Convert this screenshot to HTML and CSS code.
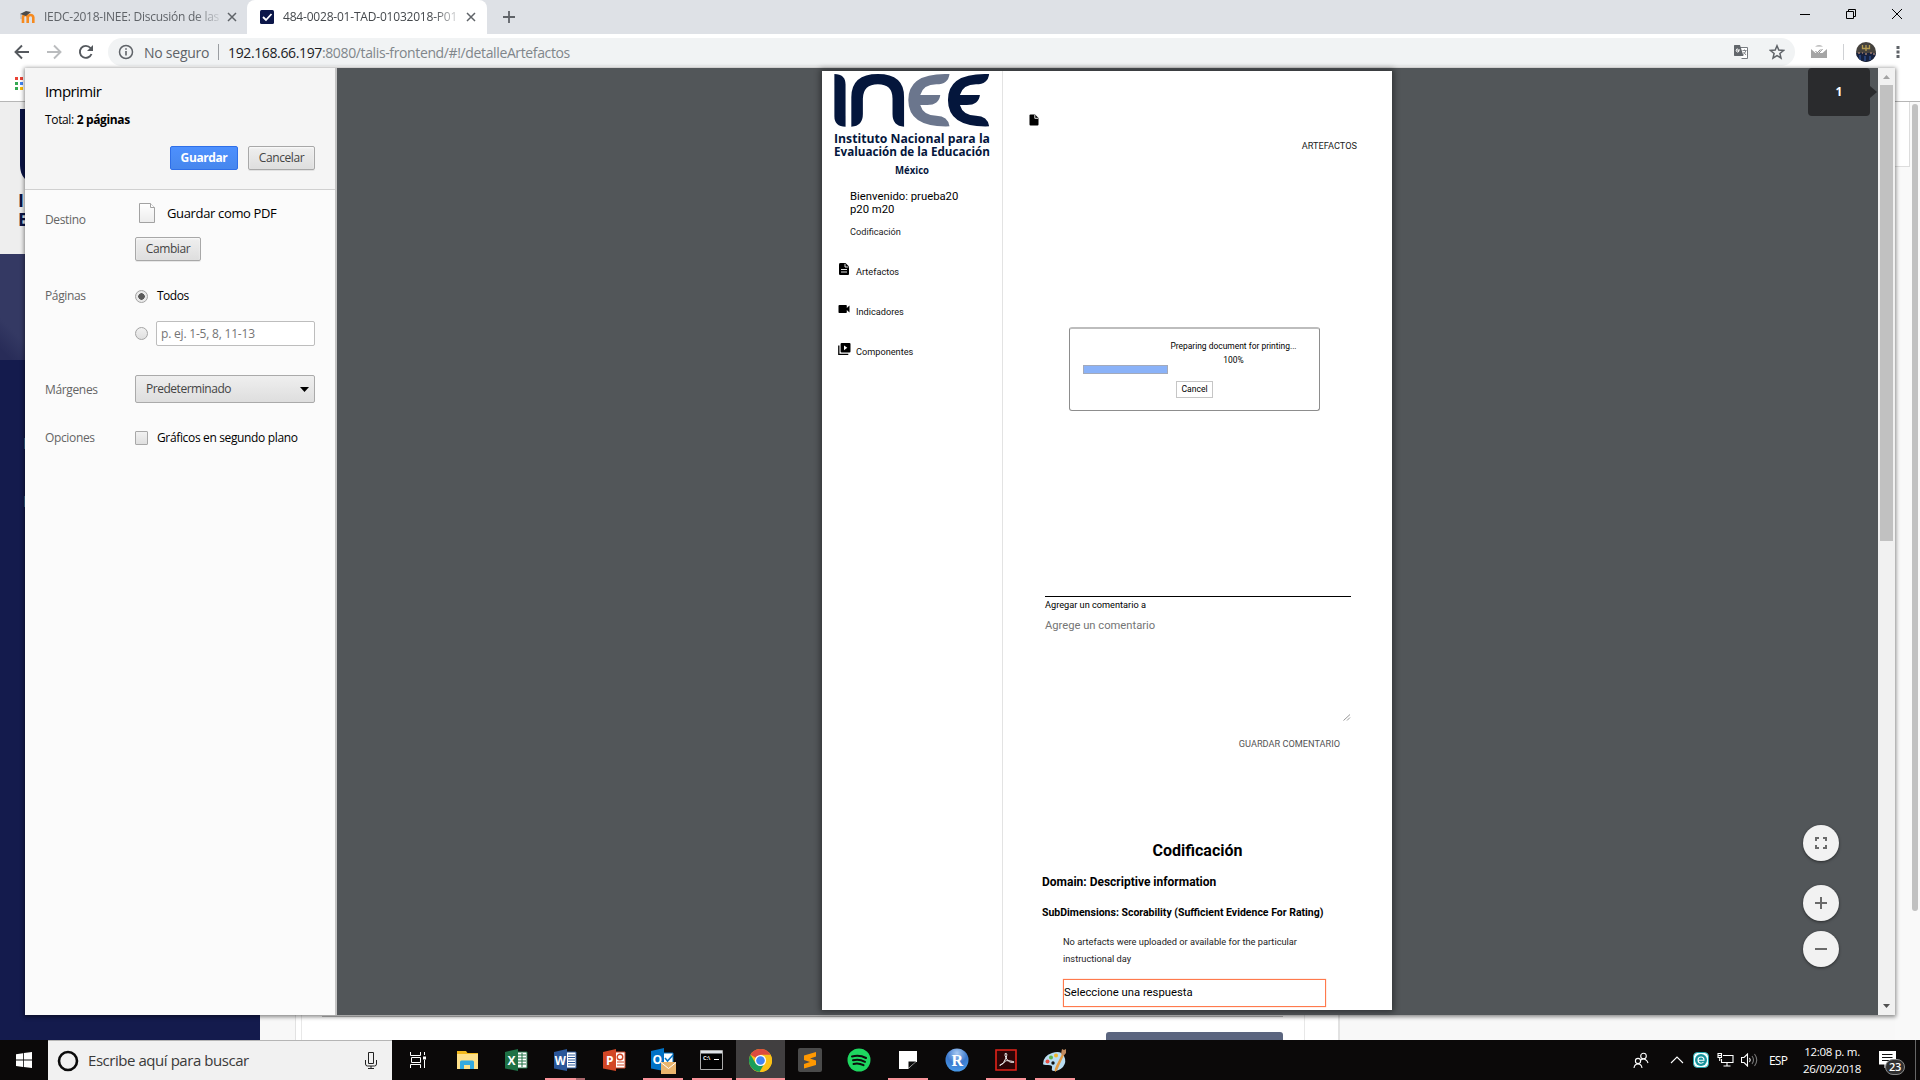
FILE: index.html
```html
<!DOCTYPE html>
<html lang="es">
<head>
<meta charset="utf-8">
<title>484-0028-01-TAD-01032018-P01</title>
<link rel="stylesheet" href="styles.css">
</head>
<body>
<div class="desktop">
  <header class="tabstrip">
    <div class="tab">
      <svg class="favicon" width="16" height="16" viewBox="0 0 16 16"><path d="M3 14V8.500q0-2.500 2.200-2.500t2.500 2.500V14M7.700 8.500q.3-2.500 2.800-2.500t2.800 2.500V14" fill="none" stroke="#f68a1f" stroke-width="2.600"/><path d="M0 5l6-3 5 1-5 4z" fill="#4a4a4a"/><path d="M1 5v5" stroke="#999" stroke-width=".7"/></svg>
      <span class="tab-title t-moodle">IEDC-2018-INEE: Discusión de las</span>
      <svg class="tab-close" width="10" height="10" viewBox="0 0 10 10"><path d="M1 1l8 8M9 1l-8 8"/></svg>
    </div>
    <div class="tab active">
      <svg class="favicon" width="16" height="16" viewBox="0 0 16 16"><rect x="1" y="1" width="14" height="14" rx="1.500" fill="#0b1648"/><path d="M4 8l3 3 5.500-6" fill="none" stroke="#fff" stroke-width="1.800"/></svg>
      <span class="tab-title t-current">484-0028-01-TAD-01032018-P01</span>
      <svg class="tab-close" width="10" height="10" viewBox="0 0 10 10"><path d="M1 1l8 8M9 1l-8 8"/></svg>
    </div>
    <svg class="new-tab" width="14" height="14" viewBox="0 0 14 14"><path d="M7 1v12M1 7h12" stroke="#5f6368" stroke-width="1.800"/></svg>
    <div class="window-buttons">
      <svg width="12" height="12" viewBox="0 0 12 12"><path d="M1 6.500h10"/></svg>
      <svg width="12" height="12" viewBox="0 0 12 12"><path d="M1.500 3.500h7v7h-7zM3.500 3.500v-2h7v7h-2"/></svg>
      <svg width="12" height="12" viewBox="0 0 12 12"><path d="M1 1l10 10M11 1L1 11"/></svg>
    </div>
  </header>

  <div class="toolbar">
    <div class="nav-icons">
      <svg width="16" height="16" viewBox="0 0 16 16"><path d="M15 8H2M8 1.500L1.500 8 8 14.500" stroke="#55595e"/></svg>
      <svg width="16" height="16" viewBox="0 0 16 16"><path d="M1 8h13M8 1.500L14.500 8 8 14.500" stroke="#babcbe"/></svg>
      <svg width="16" height="16" viewBox="0 0 16 16"><path d="M13.500 10A6 6 0 1 1 12.500 4L14 5.500" stroke="#55595e"/><path d="M15 1v6H9z" fill="#55595e" stroke="none"/></svg>
    </div>
    <div class="omnibox">
      <svg width="16" height="16" viewBox="0 0 16 16"><circle cx="8" cy="8" r="6.500" fill="none" stroke="#5f6368" stroke-width="1.500"/><path d="M8 7v4.500M8 4.200v1.600" stroke="#5f6368" stroke-width="1.600"/></svg>
      <span class="security">No seguro</span>
      <span class="omni-sep"></span>
      <span class="url"><b>192.168.66.197</b>:8080/talis-frontend/#!/detalleArtefactos</span>
      <svg class="translate" width="16" height="16" viewBox="0 0 16 16"><path d="M6 3.500h8.500v11H8.500" fill="#fff" stroke="#777b80"/><path d="M1.500 1H7l3.500 11h-9Q1 12 1 11V2q0-1 .5-1z" fill="#62666b"/><path d="M7 6H5v1h1q-.5 1.300-1.700 1T3.200 6.200 5 5" fill="none" stroke="#fff" stroke-width="1"/><path d="M9.500 6.500h4M11.500 5.500v1M13 6.500q-1 3-3 4M10.500 8l2.500 3" fill="none" stroke="#777b80" stroke-width=".9"/></svg>
      <svg class="star" width="16" height="16" viewBox="0 0 16 16"><path d="M8 1.800l1.800 4.300 4.700.4-3.600 3 1.100 4.600L8 11.600l-4 2.500 1.100-4.600-3.600-3 4.700-.4z" fill="none" stroke="#5f6368" stroke-width="1.500"/></svg>
    </div>
    <svg class="ext" width="16" height="14" viewBox="0 0 16 14"><path d="M0 4v9h16V4l-4.500 4h-7z" fill="#a5a5a5"/><path d="M4 1.500Q8-1 12 1.500z" fill="#a5a5a5"/><path d="M4.500 6l1.800 2 3-3.500M8 8l3.500-4" fill="none" stroke="#8c8c8c"/></svg>
    <span class="tool-sep"></span>
    <svg class="avatar" width="20" height="20" viewBox="0 0 20 20"><defs><clipPath id="face"><circle cx="10" cy="10" r="10"/></clipPath></defs><g clip-path="url(#face)"><path d="M0 0h20v20H0z" fill="#45423e"/><path d="M0 11h20v9H0z" fill="#16213e"/><path d="M6.500 3v3.500h7V3M10 3v6" fill="none" stroke="#b59c50" stroke-width="1.300"/><path d="M2 11h2m2 0h1m2 1h2m3-1h2m1 1h2" stroke="#9b7a6d" stroke-width="1.500"/><path d="M4 13v5m5-4v5m5-5v4" stroke="#2c4a86" stroke-width="1.500"/></g></svg>
    <svg class="menu-dots" width="4" height="14" viewBox="0 0 4 14"><path d="M.5 1h3v3h-3zM.5 5.500h3v3h-3zM.5 10h3v3h-3z" fill="#5f6368"/></svg>
  </div>

  <main class="viewport">
    <div class="bookmarks">
      <svg width="15" height="13" viewBox="0 0 15 13"><path d="M0 0h3v3H0z" fill="#ea4335"/><path d="M5 0h3v3H5z" fill="#ea4335"/><path d="M0 5h3v3H0zM0 10h3v3H0z" fill="#34a853"/><path d="M5 5h3v3H5z" fill="#4285f4"/><path d="M5 10h3v3H5z" fill="#fbbc05"/></svg>
    </div>
    <div class="site">
      <aside class="site-nav">
        <div class="site-brand">
          <svg width="20" height="82" viewBox="0 0 20 82"><path d="M0 0h20v76Q0 74 0 56z" fill="#0a1445"/></svg>
          <span>I</span><span>E</span>
        </div>
        <div class="site-photo"></div>
        <div class="site-links"><i></i><i></i></div>
      </aside>
      <section class="site-body">
        <div class="site-card">
          <div class="site-form"><div class="site-field"></div><div class="site-button"></div></div>
        </div>
      </section>
      <div class="site-rail"><div class="site-rail-top"></div></div>
      <div class="site-scroll"><div></div></div>
    </div>

    <div class="print-dialog">
      <section class="settings">
        <div class="settings-head">
          <h1>Imprimir</h1>
          <p class="total">Total: <b>2 páginas</b></p>
          <div class="actions">
            <button class="btn primary">Guardar</button>
            <button class="btn cancel">Cancelar</button>
          </div>
        </div>
        <div class="row row-dest">
          <span class="label l-dest">Destino</span>
          <div class="field">
            <div class="dest"><svg width="18" height="22" viewBox="0 0 18 22"><defs><linearGradient id="sheet" x2="0" y2="1"><stop stop-color="#fff"/><stop offset="1" stop-color="#ececec"/></linearGradient></defs><path d="M1.500 1.500h11l4 4v15h-15z" fill="url(#sheet)" stroke="#a2a2a2"/><path d="M12.500 1.500v4h4" fill="#fff" stroke="#a2a2a2"/></svg><span class="t-pdf">Guardar como PDF</span></div>
            <button class="btn change">Cambiar</button>
          </div>
        </div>
        <div class="row row-pages">
          <span class="label l-pages">Páginas</span>
          <div class="field">
            <div class="choice"><i class="radio on"></i><span class="t-todos">Todos</span></div>
            <div class="choice range"><i class="radio"></i><span class="input">p. ej. 1-5, 8, 11-13</span></div>
          </div>
        </div>
        <div class="row row-margins">
          <span class="label l-margins">Márgenes</span>
          <div class="field select"><span class="t-sel">Predeterminado</span><svg width="9" height="5" viewBox="0 0 9 5"><path d="M0 0h9L4.500 5z"/></svg></div>
        </div>
        <div class="row row-options">
          <span class="label l-options">Opciones</span>
          <div class="field choice"><i class="check"></i><span class="t-graf">Gráficos en segundo plano</span></div>
        </div>
      </section>

      <section class="preview">
        <article class="sheet">
          <aside class="sheet-side">
            <svg class="logo" width="158" height="104" viewBox="0 0 158 104">
              <g transform="translate(1 0) scale(.3850 .3333) translate(-64 -33)">
                <path d="M65 42q29 0 29 32v126q-29 0-29-32z" fill="#04163c"/>
                <path d="M109 200V112Q109 42 178 42t68 70v88q-30-2-30-38v-46q0-43-38-43t-39 43v46q0 36-30 38z" fill="#04163c"/>
                <path d="M364 42q-3 31-34 31-34 0-42 32h52q-3 30-34 30h-18q8 32 42 32 30 0 34 32-107 4-107-79t107-78z" fill="#6b768d"/>
                <path d="M467 42q-3 31-34 31-34 0-42 32h52q-3 30-34 30h-18q8 32 42 32 30 0 34 32-107 4-107-79t107-78z" fill="#04163c"/>
              </g>
              <g fill="#04163c" font-family="Open Sans, sans-serif" font-weight="700">
                <text x="1" y="72" font-size="13.200" textLength="156" lengthAdjust="spacingAndGlyphs">Instituto Nacional para la</text>
                <text x="1" y="85" font-size="13.200" textLength="156" lengthAdjust="spacingAndGlyphs">Evaluación de la Educación</text>
                <text x="62" y="103" font-size="11" textLength="34" lengthAdjust="spacingAndGlyphs">México</text>
              </g>
            </svg>
            <p class="welcome">Bienvenido: prueba20<br>p20 m20</p>
            <p class="role">Codificación</p>
            <nav class="side-links">
              <a><svg width="12" height="12" viewBox="0 0 12 12"><path d="M2.500 0H7.500L11 3.500V11q0 1-1 1H2.200Q1 12 1 11V1.200Q1 0 2.500 0z"/><path d="M7 .8V4h3.300M3 6.500h6M3 9h6" fill="none" stroke="#fff" stroke-width=".9"/></svg><span>Artefactos</span></a>
              <a><svg width="12" height="12" viewBox="0 0 12 12"><path d="M1.500 2H8q.8 0 .8.800V5l2.700-2.500v7L8.800 7v2.200q0 .8-.8.800H1.300q-.8 0-.8-.8V2.800q0-.8 1-.8z"/></svg><span>Indicadores</span></a>
              <a><svg width="13" height="12" viewBox="0 0 13 12"><path d="M3.600 0H11.500q1 0 1 1v7.500q0 1-1 1H3.600q-1 0-1-1V1q0-1 1-1z"/><path d="M.8 2.500v8.800h9.500" fill="none" stroke="#000" stroke-width="1.300"/><path d="M6 2.500v4.700l3.300-2.400z" fill="#fff"/></svg><span>Componentes</span></a>
            </nav>
          </aside>
          <div class="sheet-main">
            <svg class="doc-icon" width="10" height="12" viewBox="0 0 10 12"><path d="M1.500.5H6L9.500 4v6.500q0 1-1 1H1.500q-1 0-1-1v-9q0-1 1-1z"/><path d="M5.800.8V4.300H9.200" fill="none" stroke="#fff" stroke-width=".9"/></svg>
            <div class="crumb"><span class="t-crumb">ARTEFACTOS</span></div>
            <div class="progress-box">
              <div class="progress-text"><span class="t-prep">Preparing document for printing...</span><span>100%</span></div>
              <div class="progress-bar"></div>
              <div class="progress-cancel"><span>Cancel</span></div>
            </div>
            <div class="comment">
              <span class="t-add">Agregar un comentario a</span>
              <span class="t-ph">Agrege un comentario</span>
              <svg width="8" height="7" viewBox="0 0 8 7"><path d="M.5 6.500L7 .5M4 6.500l3-3" stroke="#8a8a8a" stroke-width=".9"/></svg>
            </div>
            <div class="save"><span class="t-save">GUARDAR COMENTARIO</span></div>
            <h2><span>Codificación</span></h2>
            <h3><span>Domain: Descriptive information</span></h3>
            <h4><span>SubDimensions: Scorability (Sufficient Evidence For Rating)</span></h4>
            <p class="question"><span>No artefacts were uploaded or available for the particular<br>instructional day</span></p>
            <div class="answer"><span>Seleccione una respuesta</span></div>
          </div>
        </article>
        <div class="page-badge">1</div>
        <div class="zoom-buttons">
          <i><svg width="12" height="12" viewBox="0 0 12 12"><path d="M1 4V1h3M8 1h3v3M11 8v3H8M4 11H1V8"/></svg></i>
          <i><svg width="12" height="12" viewBox="0 0 12 12"><path d="M6 0v12M0 6h12"/></svg></i>
          <i><svg width="12" height="12" viewBox="0 0 12 12"><path d="M0 6h12"/></svg></i>
        </div>
      </section>
      <div class="scrollbar">
        <svg width="7" height="4" viewBox="0 0 7 4"><path d="M0 4h7L3.500 0z" fill="#a3a3a3"/></svg>
        <div class="thumb"></div>
        <svg width="7" height="4" viewBox="0 0 7 4"><path d="M0 0h7L3.500 4z" fill="#505050"/></svg>
      </div>
    </div>
  </main>

  <footer class="taskbar">
    <div class="start"><svg width="16" height="16" viewBox="0 0 16 16"><path d="M0 2.200L7 1.200V7.600H0zM7.800 1.100L16 0v7.600H7.800zM0 8.400h7v6.500l-7-1zM7.800 8.400H16V16l-8.200-1.100z" fill="#fff"/></svg></div>
    <div class="search">
      <svg width="22" height="22" viewBox="0 0 22 22"><circle cx="11" cy="11" r="9" fill="none" stroke="#0b0b0b" stroke-width="2.600"/></svg>
      <span class="t-search">Escribe aquí para buscar</span>
      <svg width="12" height="17" viewBox="0 0 12 17"><path d="M3.500.5h5v11h-5zM.5 8v4q0 2 2 2h7q2 0 2-2V8M6 14v2M3 16.500h6" fill="none" stroke="#222"/></svg>
    </div>
    <div class="apps">
      <div><svg width="18" height="16" viewBox="0 0 18 16"><path d="M1.500 0v3.500h10V0M2.500 5.500h9v5h-9zM1.500 16v-3.500h10V16M15.500 0v3M15.500 8v8" fill="none" stroke="#fff"/><path d="M14 4.500h3v3h-3z" fill="#fff"/></svg></div>
      <div><svg width="22" height="20" viewBox="0 0 22 20"><path d="M1 1h9l1.500 2H22v15H1z" fill="#f2b91d"/><path d="M1 4h21v15H1z" fill="#fde08a"/><path d="M4 19v-7q0-1.500 1.500-1.500h11Q18 10.500 18 12v7h-4v-4H8v4z" fill="#35aae0"/></svg></div>
      <div><svg width="24" height="22" viewBox="0 0 24 22"><path d="M13 3h10v16H13z" fill="#fff" stroke="#1e7145"/><path d="M14 6h8M14 9h8M14 12h8M14 15h8M18 4v14" stroke="#1e7145"/><path d="M1 3l13-3v22L1 19.500z" fill="#1e7145"/><text x="3.500" y="15.500" font-size="12">X</text></svg></div>
      <div class="run stacked"><svg width="24" height="22" viewBox="0 0 24 22"><path d="M13 3h10v16H13z" fill="#fff" stroke="#2a5699"/><path d="M15 6h7M15 8.500h7M15 11h7M15 13.500h7M15 16h7" stroke="#2a5699"/><path d="M1 3l13-3v22L1 19.500z" fill="#2a5699"/><text x="1.800" y="15.500" font-size="11.500">W</text></svg></div>
      <div><svg width="24" height="22" viewBox="0 0 24 22"><path d="M13 3h10v16H13z" fill="#fff" stroke="#d24726"/><path d="M15 13h7M15 16h7" stroke="#d24726"/><circle cx="18" cy="8" r="2.800" fill="none" stroke="#d24726" stroke-width="1.400"/><path d="M1 3l13-3v22L1 19.500z" fill="#d24726"/><text x="4" y="15.500" font-size="12">P</text></svg></div>
      <div class="run"><svg class="mail" width="26" height="26" viewBox="0 0 26 26"><path d="M13 5h10v10H13z" fill="#fff" stroke="#0072c6"/><path d="M15 10l2.500 3L23 7" fill="none" stroke="#0072c6" stroke-width="1.500"/><path d="M1 3l13-3v23L1 20.500z" fill="#0072c6"/><text x="2.500" y="16" font-size="12">O</text><path d="M11 14h15v12H11z" fill="#eab56d"/><path d="M11 14.500l7.500 6 7.500-6" fill="none" stroke="#fff"/></svg></div>
      <div class="run"><svg width="24" height="20" viewBox="0 0 24 20"><path d="M.5.500h22v19H.5z" fill="#000" stroke="#aaa"/><path d="M1 1h21v2.500H1z" fill="#dfe3e8"/><text x="3" y="9.500" font-size="5.500">C:\</text><path d="M14 9.500h5" stroke="#fff"/></svg></div>
      <div class="run current"><svg width="23" height="23" viewBox="0 0 24 24"><circle cx="12" cy="12" r="12" fill="#fbc116"/><path d="M12 12L1.600 6A12 12 0 0 1 22.400 6z" fill="#dd4b3e"/><path d="M1.600 6A12 12 0 0 0 11 24l5.500-9.500-9.500.5z" fill="#1b9e5a"/><path d="M12 6h10.400A12 12 0 0 1 12 24l5-9z" fill="#fbc116"/><circle cx="12" cy="12" r="5.800" fill="#fff"/><circle cx="12" cy="12" r="4.500" fill="#4285f4"/></svg></div>
      <div><svg width="24" height="24" viewBox="0 0 24 24"><rect width="24" height="24" rx="2" fill="#4a4a4a"/><path d="M6 7.500l12-3.500v4.500l-6 2 6 2v4.500L6 20.500V16l6-2-6-2z" fill="#ff9800"/></svg></div>
      <div><svg width="24" height="24" viewBox="0 0 24 24"><circle cx="12" cy="12" r="11.500" fill="#1ed760"/><path d="M5 8.500q7.500-2 14 1.500M6 12.300q6-1.700 12 1.500M6.500 16q5-1.300 10 1.200" fill="none" stroke="#0c0c0c" stroke-width="2" stroke-linecap="round"/></svg></div>
      <div class="run"><svg width="18" height="18" viewBox="0 0 18 18"><path d="M0 0h18v18H0z" fill="#fff"/><path d="M9 18v-7h9v7z" fill="#0c0c0c"/><path d="M9 18v-8h9z" fill="#fff"/><path d="M9.500 17v-6.500H17z" fill="#0c0c0c"/></svg></div>
      <div><svg width="24" height="24" viewBox="0 0 24 24"><defs><radialGradient id="ball" cx=".5" cy=".2" r=".9"><stop stop-color="#a9cbf3"/><stop offset=".5" stop-color="#3b78cd"/><stop offset="1" stop-color="#4ba3f0"/></radialGradient></defs><circle cx="12" cy="12" r="11.500" fill="url(#ball)"/><text class="serif" x="6.500" y="17.500" font-size="16">R</text></svg></div>
      <div class="run"><svg width="22" height="22" viewBox="0 0 22 22"><path d="M1 1h20v20H1z" fill="#2a0506" stroke="#e2231a" stroke-width="1.600"/><path d="M5 16.500q4-2 6-7.500t-.8-4.500q-1 1.500 1.500 5.500t6 3.500-2-1.500-6 .8-5 3.500z" fill="none" stroke="#eee"/></svg></div>
      <div class="run"><svg width="25" height="25" viewBox="0 0 25 25"><path d="M1 16Q1 8 10 5t12 3-1 11q-4 4-9 4-3 0-2-3t-4-3-5-1z" fill="#b9dcf1"/><circle cx="5.500" cy="13.500" r="2" fill="#e54f42"/><circle cx="9" cy="9.500" r="2" fill="#5bb34c"/><circle cx="14" cy="7.500" r="2" fill="#f0b52c"/><circle cx="11" cy="15" r="1.700" fill="#111"/><path d="M13 24q-1-3 2-8l5-10 2 1-5 11q-1 4-4 6z" fill="#e29a43"/><path d="M19 6l1-5 2 1 2-1v4l-2.500 3z" fill="#c08a5e"/></svg></div>
    </div>
    <div class="tray">
      <svg class="people" width="16" height="17" viewBox="0 0 16 17"><circle cx="10.500" cy="4" r="2.800"/><path d="M8 8q2.500-2 5 0 1.500 1 2 3"/><circle cx="5" cy="9" r="2.600"/><path d="M1 16q.5-4 4-4t4 4"/></svg>
      <svg class="chev" width="14" height="8" viewBox="0 0 14 8"><path d="M1 7l6-6 6 6" stroke-width="1.400"/></svg>
      <svg class="eset" width="16" height="16" viewBox="0 0 16 16"><rect x=".5" y=".5" width="15" height="15" rx="4" fill="#f2ffff" stroke="#1ba4ad"/><circle cx="8" cy="8" r="6" fill="#16919b" stroke="none"/><path d="M5 8.200h6Q11 5 8 5T5 8t3 3.200q1.500 0 2.500-1" stroke="#fff" stroke-width="1.500"/></svg>
      <svg class="net" width="17" height="14" viewBox="0 0 17 14"><path d="M6 2.500h10v7H4.500V6M10 9.500v4M6.500 13h7"/><path d="M1 .5h3.500v4H1zM2.700 4.500V8M1 2.500h3"/></svg>
      <svg class="vol" width="17" height="14" viewBox="0 0 17 14"><path d="M.5 4.500H3L6.500 1v12L3 9.500H.5z"/><path d="M8.500 5q1.500 2 0 4"/><path d="M11 3q3 4 0 8M13.500 1q4.500 6 0 12" stroke="#888"/></svg>
      <span class="lang">ESP</span>
      <div class="clock"><span>12:08 p. m.</span><span>26/09/2018</span></div>
      <div class="notif"><svg width="17" height="17" viewBox="0 0 17 17"><path d="M0 0h16.500v13H10l-4 3.500V13H0z" fill="#fff" stroke="none"/><path d="M3 3.500h10.500M3 6.500h10.500M3 9.500h8" stroke="#111"/></svg><b>23</b></div>
      <span class="peek"></span>
    </div>
  </footer>
</div>
</body>
</html>
```
FILE: styles.css
```css
* { box-sizing: border-box; }
html, body { margin: 0; }
body { width: 1920px; height: 1080px; overflow: hidden; font-family: "Open Sans", "Noto Sans", sans-serif; font-size: 12px; color: #000; }
h1, h2, h3, h4, p { margin: 0; font-weight: 400; }
svg { display: block; flex: none; }
span { white-space: nowrap; }
.desktop { display: flex; flex-direction: column; width: 1920px; height: 1080px; }

/* Tab strip */
.tabstrip { display: flex; align-items: center; height: 34px; background: #dee1e6; }
.tab { display: flex; align-items: center; width: 247px; height: 34px; padding-left: 20px; color: #5f6368; }
.tab.active { width: 240px; padding-left: 12px; background: #fff; border-radius: 8px 8px 0 0; color: #45494d; }
.tab-title { width: 176px; margin-left: 8px; overflow: hidden; line-height: 18px; -webkit-mask-image: linear-gradient(90deg, #000 150px, transparent 180px); mask-image: linear-gradient(90deg, #000 150px, transparent 180px); }
.t-moodle { letter-spacing: -0.25px; }
.t-current { letter-spacing: -0.2px; }
.tab-close { margin-left: 7px; }
.tab-close path { fill: none; stroke: #5f6368; stroke-width: 1.500; }
.new-tab { margin-left: 15px; }
.window-buttons { display: flex; gap: 34px; margin: -6px 17px 0 auto; }
.window-buttons path { fill: none; stroke: #000; stroke-width: 1; }

/* Toolbar */
.toolbar { display: flex; align-items: center; height: 34px; padding: 2px 0 0; background: #fff; }
.nav-icons { display: flex; gap: 16px; padding-left: 14px; }
.nav-icons path { fill: none; stroke-width: 1.900; }
.nav-icons svg:last-child path:last-child { fill: #55595e; }
.omnibox { display: flex; align-items: center; width: 1687px; height: 28px; margin-left: 14px; padding-left: 10px; border-radius: 14px; background: #f1f3f4; font-size: 14px; color: #5f6368; }
.security { width: 66px; margin-left: 10px; letter-spacing: -.25px; }
.omni-sep { width: 1px; height: 16px; margin: 0 9px 0 8px; background: #9a9da1; }
.url { color: #80868b; letter-spacing: -.37px; }
.url b { font-weight: 400; color: #202124; }
.translate { margin-left: auto; }
.star { margin: 0 10px 0 20px; }
.ext { margin-left: 16px; }
.tool-sep { width: 1px; height: 16px; margin: 0 12px 0 16px; background: #cfd1d4; }
.menu-dots { margin-left: 20px; }

/* Page under the dialog */
.viewport { position: relative; display: flex; flex-direction: column; height: 972px; background: #fff; }
.bookmarks { height: 34px; padding: 9px 0 0 15px; border-bottom: 1px solid #b6b6b6; }
.site { display: flex; flex: 1; }
.site-nav { display: flex; flex-direction: column; width: 260px; background: #141b4d; }
.site-brand { height: 152px; padding: 7px 0 0 20px; background: #eee; font: 700 18px/19px "Open Sans", sans-serif; color: #0a1445; }
.site-brand span { display: block; margin-left: -2px; }
.site-photo { height: 106px; background: linear-gradient(45deg, #282c58 8px, #343963 30px); }
.site-links { display: flex; flex-direction: column; gap: 47px; padding: 78px 0 0 24px; }
.site-links i { width: 8px; height: 11px; background: #39668f; }
.site-body { flex: 1; padding-left: 35px; background: #f8f8f8; }
.site-card { width: 1045px; height: 938px; padding-left: 5px; border: solid #e2e2e2; border-width: 0 2px 0 1px; background: #fff; }
.site-form { width: 1004px; height: 938px; padding: 0 21px 0 20px; border: solid #e8e8e8; border-width: 0 1px; }
.site-field { height: 915px; border-bottom: 1px solid #bbb; }
.site-button { width: 177px; height: 8px; margin: 15px 0 0 auto; border-radius: 3px 3px 0 0; background: #5b657f; }
.site-rail { width: 15px; background: #f9f9f9; }
.site-rail-top { height: 65px; border: solid #ddd; border-width: 0 1px 1px 0; background: #fff; }
.site-scroll { width: 10px; padding: 2px 2px 0; background: #f9f9f9; }
.site-scroll div { height: 807px; border-radius: 3px; background: #c1c1c1; }

/* Print dialog */
.print-dialog { position: absolute; left: 25px; top: 0; display: flex; width: 1870px; height: 947px; background: #525659; box-shadow: 0 1px 4px 1px rgba(0, 0, 0, .45); }
.settings { width: 312px; border-right: 2px solid #c4c4c4; background: #fbfbfb; letter-spacing: -.35px; }
.settings-head { height: 122px; padding: 11px 20px 0; border-bottom: 1px solid #d0d0d0; background: #f5f5f5; }
.settings-head h1 { height: 24px; font-size: 15px; line-height: 24px; letter-spacing: -.6px; }
.total { height: 16px; margin-top: 9px; line-height: 16px; white-space: nowrap; }
.actions { display: flex; justify-content: flex-end; gap: 10px; margin-top: 18px; }
.btn { height: 24px; padding: 0; border: 1px solid #a8a8a8; border-radius: 2px; background: linear-gradient(#efefef, #dedede); font: 12px/20px "Open Sans", sans-serif; letter-spacing: -.4px; color: #444; text-align: center; box-shadow: 0 1px 0 rgba(0, 0, 0, .08), inset 0 1px 2px rgba(255, 255, 255, .75); }
.primary { width: 68px; border-color: #2f6fe8; background: linear-gradient(#4d90fe, #4787ed); color: #fff; font-weight: 700; box-shadow: none; }
.cancel { width: 67px; }
.change { width: 66px; margin-top: 12px; display: block; }
.row { display: flex; padding-left: 20px; line-height: 16px; }
.label { width: 90px; color: #646464; }
.field { width: 180px; }
.row-dest { padding-top: 11px; }
.l-dest { padding-top: 11px; }
.dest { display: flex; align-items: center; gap: 11px; height: 24px; padding-left: 3px; font-size: 13px; }
.row-pages { margin-top: 27px; }
.choice { display: flex; align-items: center; gap: 9px; height: 16px; }
.t-todos { letter-spacing: -.5px; }
.range { gap: 8px; height: 25px; margin-top: 17px; }
.radio { flex: none; width: 13px; height: 13px; border: 1px solid #a3a3a3; border-radius: 50%; background: linear-gradient(#f1f1f1, #dfdfdf); }
.radio.on { background: radial-gradient(#5a5a5a 3px, #e9e9e9 3.500px); }
.input { width: 159px; height: 25px; padding-left: 4px; border: 1px solid #bdbdbd; border-radius: 2px; background: #fff; line-height: 23px; color: #757575; letter-spacing: -.2px; }
.row-margins { height: 28px; margin-top: 29px; line-height: 30px; }
.select { display: flex; align-items: center; justify-content: space-between; padding: 0 5px 0 10px; border: 1px solid #aaa; border-radius: 2px; background: linear-gradient(#efefef, #dedede); color: #444; letter-spacing: -.47px; }
.row-options { margin-top: 27px; }
.row-options .choice { height: 16px; }
.check { flex: none; width: 13px; height: 14px; border: 1px solid #a8a8a8; border-radius: 1px; background: linear-gradient(#f1f1f1, #dfdfdf); }

/* Preview */
.preview { position: relative; width: 1541px; padding: 3px 0 0 485px; }
.sheet { display: flex; width: 570px; height: 939px; background: #fff; font-family: Roboto, sans-serif; box-shadow: 0 0 6px 2px rgba(0, 0, 0, .4); }
.sheet-side { width: 181px; border-right: 1px solid #e3e3e3; }
.logo { margin-left: 11px; overflow: visible; }
.welcome { margin: 15px 0 0 28px; font-size: 11.300px; line-height: 13px; }
.role { margin: 9px 0 0 28px; font-size: 9.200px; line-height: 14px; color: #222; }
.side-links { display: flex; flex-direction: column; gap: 28px; margin: 24px 0 0 16px; font-size: 9.200px; color: #111; }
.side-links a { display: flex; gap: 6px; height: 12px; }
.side-links span { padding-top: 3px; line-height: 12px; }
.side-links a:last-child { gap: 5px; }
.sheet-main { width: 389px; }
.doc-icon { margin: 43px 0 0 26px; }
.crumb { display: flex; justify-content: flex-end; margin: 13px 35px 0 0; font-size: 9.200px; line-height: 14px; color: #222; }
.progress-box { width: 251px; height: 84px; margin: 174px 0 0 66px; padding: 10px 13px 0; border: 1px solid #8d8d8d; border-top: 2px solid #bdbdbd; border-radius: 3px; font-size: 8.450px; line-height: 14px; }
.progress-text { display: flex; flex-direction: column; align-items: center; margin: 0 1px 0 79px; }
.progress-bar { width: 85px; height: 9px; margin-top: -2px; border: 1px solid #a3aabb; background: #8ab2f8; }
.progress-cancel { width: 37px; height: 17px; margin: 7px auto 0; border: 1px solid #c6c6c6; font-size: 8.600px; line-height: 14px; text-align: center; }
.comment { display: flex; flex-direction: column; width: 306px; height: 126px; margin: 185px 0 0 42px; border-top: 1px solid #000; }
.t-add { margin-top: 1px; font-size: 9.200px; line-height: 14px; }
.t-ph { margin-top: 6px; font-size: 11.200px; line-height: 16px; color: #757575; }
.comment svg { margin: auto 0 1px auto; }
.save { display: flex; justify-content: flex-end; margin: 15px 52px 0 0; font-size: 9.200px; line-height: 14px; color: #555; }
h2 { margin-top: 90px; text-align: center; font-size: 16px; font-weight: 700; line-height: 20px; }
h3 { margin: 13px 0 0 39px; font-size: 12px; font-weight: 700; line-height: 16px; }
h4 { margin: 16px 0 0 39px; font-size: 10.500px; font-weight: 700; line-height: 14px; }
.question { margin: 13px 0 0 60px; font-size: 9.250px; line-height: 17px; color: #222; }
.answer { width: 263px; height: 28px; margin: 12px 0 0 60px; border: 1px solid #ff7a4d; box-shadow: 0 0 1px #ff9a75; font-size: 11.300px; line-height: 26px; }
.page-badge { position: absolute; top: 0; right: 8px; width: 62px; height: 48px; border-radius: 4px; background: #2a2b2d; color: #fff; font-weight: 700; line-height: 48px; text-align: center; }
.page-badge::after { content: ""; position: absolute; left: 62px; top: 18px; border: solid transparent; border-width: 6px 0 6px 7px; border-left-color: #2a2b2d; }
.zoom-buttons { position: absolute; right: 39px; top: 757px; display: flex; flex-direction: column; gap: 10px; }
.zoom-buttons i { display: grid; place-items: center; width: 36px; height: 36px; border-radius: 50%; background: #f2f2f2; box-shadow: 0 1px 3px rgba(0, 0, 0, .5); }
.zoom-buttons i:first-child { margin-bottom: 14px; }
.zoom-buttons path { fill: none; stroke: #6a6a6a; stroke-width: 2; }
.scrollbar { display: flex; flex-direction: column; align-items: center; width: 17px; padding: 7px 0; background: #f1f1f1; }
.thumb { width: 13px; height: 456px; margin: 6px 0 auto; background: #c1c1c1; }

/* Taskbar */
.taskbar { display: flex; height: 40px; background: #0b0909; color: #fff; }
.start { display: grid; place-items: center; width: 48px; }
.search { display: flex; align-items: center; width: 344px; padding: 0 15px 0 9px; border-top: 1px solid #b5b5b5; background: #f1f1f1; color: #3a3a3a; font-size: 15px; }
.t-search { flex: 1; margin: 0 0 2px 9px; letter-spacing: -.45px; }
.apps { display: flex; padding-left: 1px; }
.apps > div { position: relative; display: grid; place-items: center; width: 49px; }
.apps .mail { margin-top: 2px; }
.apps text { fill: #fff; font-family: "Open Sans", sans-serif; font-weight: 700; }
.apps text.serif { font-family: "Liberation Serif", serif; }
.run::after { content: ""; position: absolute; left: 5px; bottom: 0; width: 40px; height: 2px; background: #f99299; }
.stacked::after { background: linear-gradient(90deg, #f99299 31px, #a9666b 31px); }
.current { background: #413f40; }
.current::after { left: 0; width: 49px; }
.tray { display: flex; align-items: center; margin-left: auto; }
.tray path, .tray circle { fill: none; stroke: #fff; stroke-width: 1.100; }
.tray .eset circle { fill: #16919b; stroke: none; }
.tray .vol path:last-child { stroke: #777; }
.tray .notif path:first-child { fill: #fff; }
.tray .notif path:last-child { stroke: #111; }
.chev { margin-left: 21px; }
.eset { margin-left: 9px; }
.net { margin-left: 8px; }
.vol { margin-left: 7px; }
.lang { width: 19px; margin-left: 11px; font-size: 12px; letter-spacing: -.8px; }
.clock { display: flex; flex-direction: column; align-items: center; width: 60px; margin-left: 14px; line-height: 17px; font-size: 11.500px; letter-spacing: -.3px; }
.notif { position: relative; width: 26px; height: 17px; margin: -2px 10px 0 17px; }
.notif b { position: absolute; left: 6px; top: 8px; width: 20px; height: 16px; border: 1px solid #8a8a8a; border-radius: 8px; background: #303030; font-size: 11px; font-weight: 600; line-height: 14px; text-align: center; letter-spacing: -.4px; }
.peek { width: 1px; height: 40px; margin-right: 4px; background: #666; }
```
